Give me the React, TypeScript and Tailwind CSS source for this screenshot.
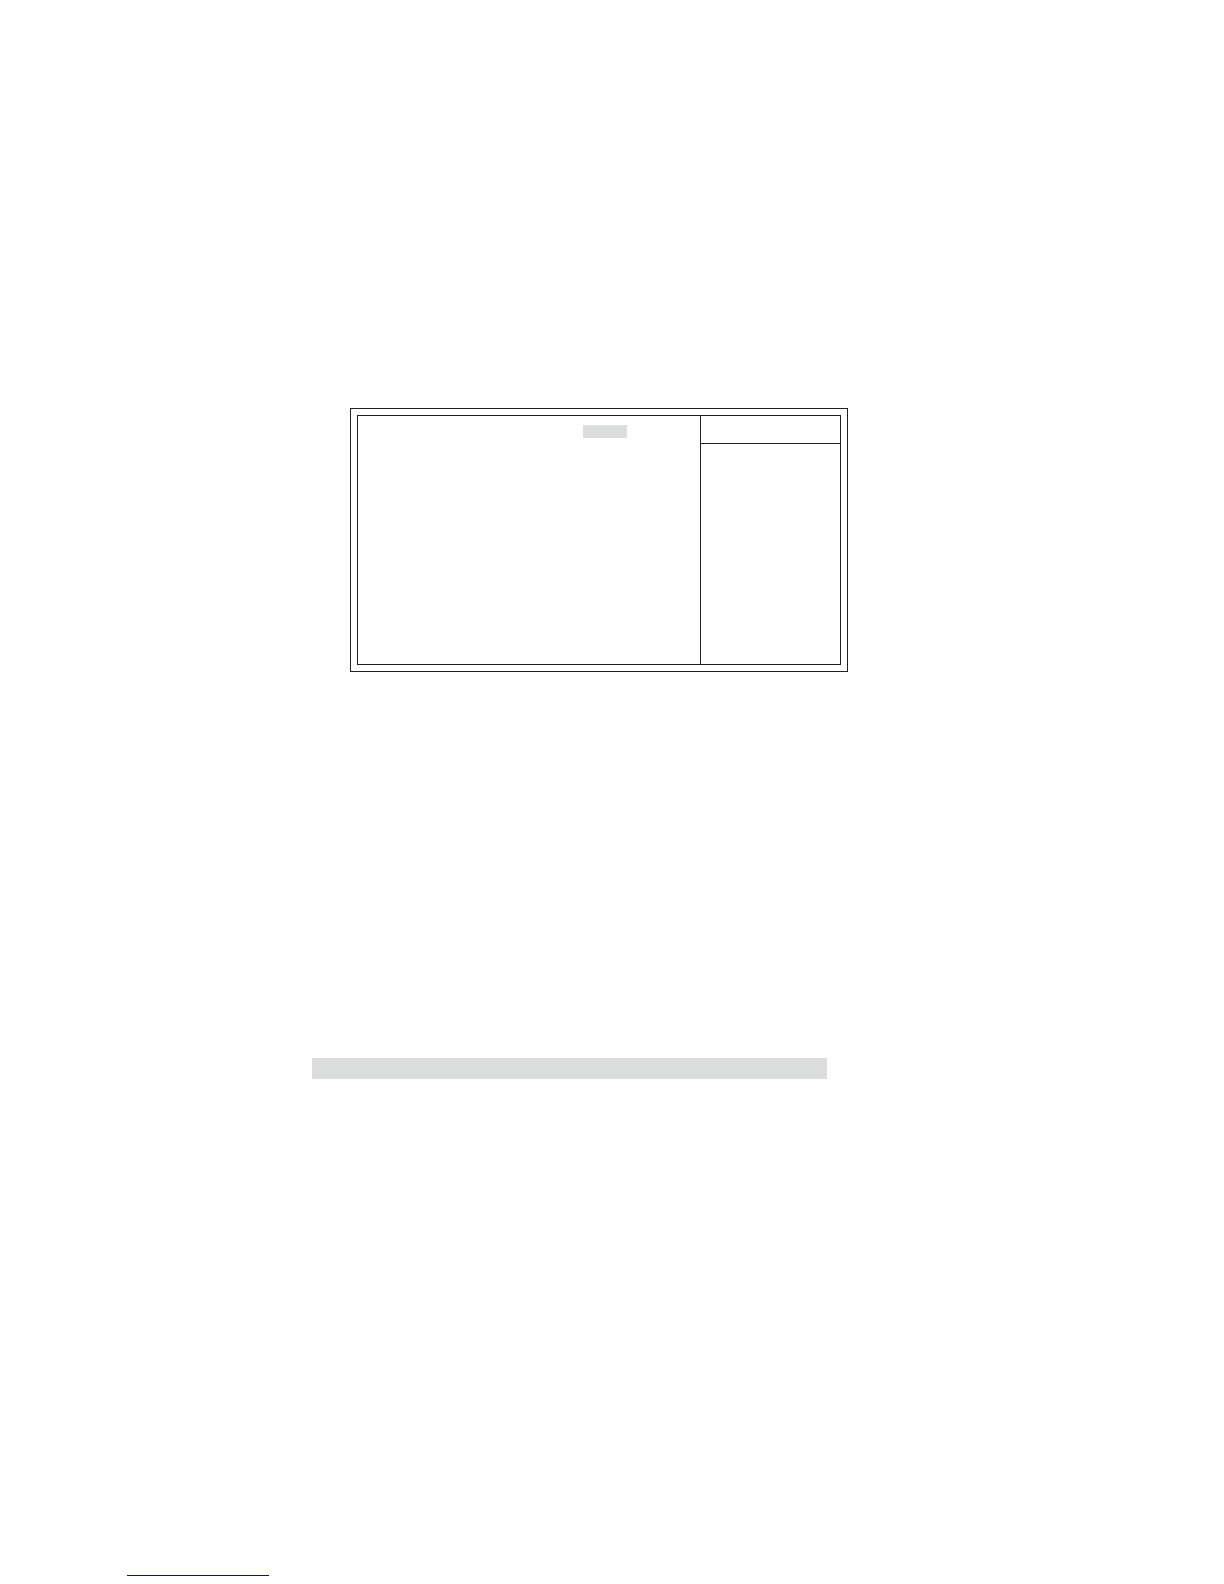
export default function App() {
  return (
    <main className="flex min-h-screen flex-col bg-white pt-[408px] pb-2">
      <div className="pr-4 pl-[350px]">
        <section
          aria-label="Setup screen"
          className="w-full max-w-[498px] border border-[#231f20] p-[6px]"
        >
          <div className="flex min-h-[250px] border border-[#231f20]">
            <div className="flex flex-1 items-start justify-end pt-[9px] pr-[73px]">
              <div className="h-[13px] w-11 bg-[#dcdddd]" />
            </div>
            <aside className="flex w-[140px] flex-col border-l border-[#231f20]">
              <div className="h-7 border-b border-[#231f20]" />
              <div className="flex-1" />
            </aside>
          </div>
        </section>
      </div>

      <div className="mt-[386px] pr-4 pl-[312px]">
        <div className="h-[21px] w-full max-w-[515px] bg-[#dbdddd]" />
      </div>

      <footer className="mt-[477px] pl-[127px]">
        <a
          href="#top"
          aria-label="Back to top"
          className="block h-5 w-full max-w-[142px] border-b border-[#0a0a96]"
        />
      </footer>
    </main>
  );
}
